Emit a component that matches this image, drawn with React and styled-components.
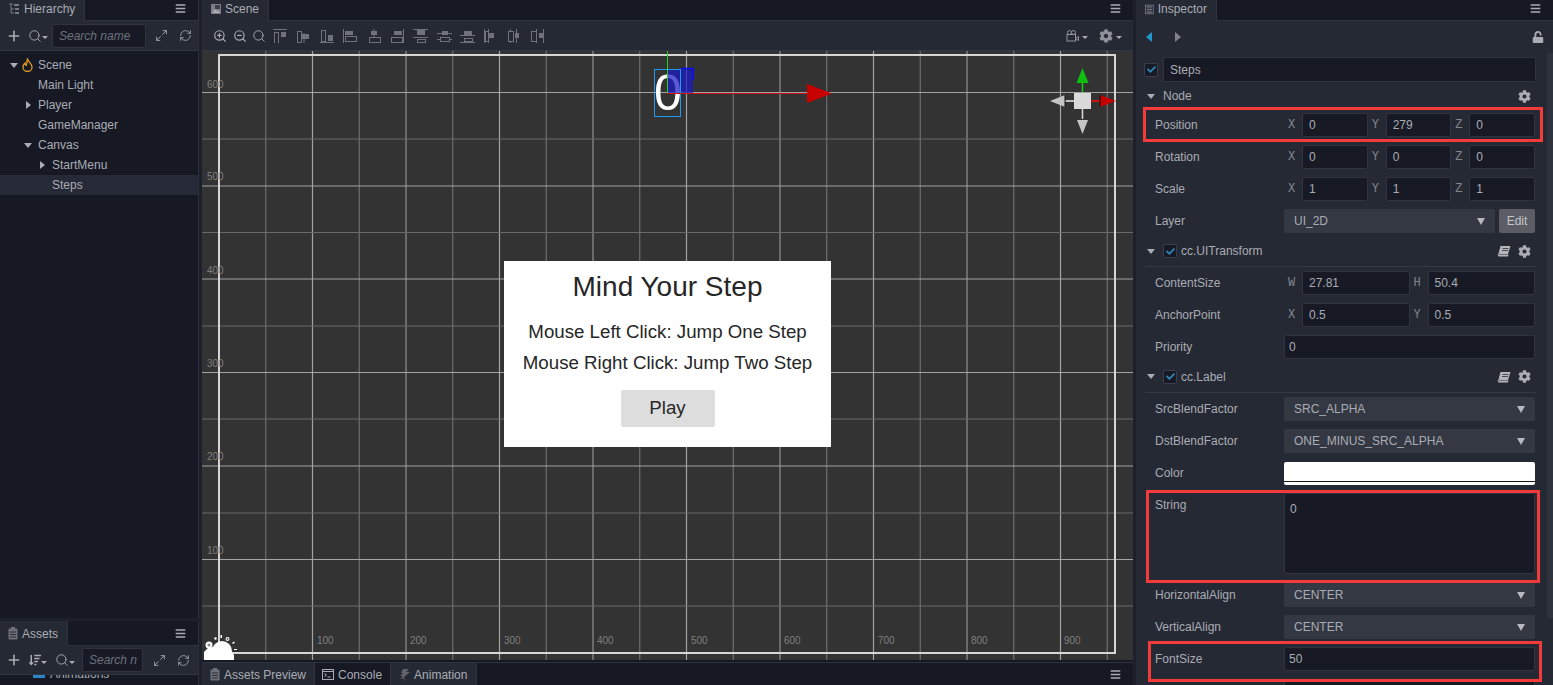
import React from 'react'
import styled, { createGlobalStyle } from 'styled-components'
import { FaBars, FaCheck, FaCog, FaSortAmountDown, FaUnlock } from 'react-icons/fa'
import { Maximize2, Plus, RefreshCw, Search, ZoomIn, ZoomOut } from 'lucide-react'

const GlobalStyle = createGlobalStyle`
  html, body {
    margin: 0;
    padding: 0;
    width: 100%;
    height: 100%;
    overflow: hidden;
    background: #1b1e29;
  }
  * { box-sizing: border-box; }
`

const Page = styled.div`
  width: 1553px;
  height: 685px;
  display: flex;
  gap: 3px;
  overflow: hidden;
  background: #1d202b;
  color: #a9acb3;
  font-family: "Liberation Sans", Arial, sans-serif;
  font-size: 12px;
`

const LeftColumn = styled.div`
  width: 199px;
  display: flex;
  flex-direction: column;
  gap: 3px;
`

const Panel = styled.section`
  display: flex;
  flex-direction: column;
  overflow: hidden;
  min-height: 0;
  flex: ${(p) => p.$flex || 'none'};
  height: ${(p) => (p.$height ? `${p.$height}px` : 'auto')};
  background: #161924;
  border-right: 1px solid #2b2f3b;
`

const TabBar = styled.div`
  height: ${(p) => p.$height || 21}px;
  flex: none;
  display: flex;
  align-items: stretch;
  background: #161924;
  border-bottom: 1px solid #2f3340;
  position: relative;
`

const Tab = styled.div`
  display: flex;
  align-items: center;
  gap: 4px;
  padding: 0 ${(p) => p.$pad || 9}px ${(p) => (p.$raise ? 3 : 0)}px ${(p) => p.$padLeft || 8}px;
  width: ${(p) => (p.$width ? `${p.$width}px` : 'auto')};
  height: calc(100% + 1px);
  background: ${(p) => (p.$active ? '#252934' : '#161924')};
  border-right: 1px solid #2f3340;
  color: #a9acb3;
  white-space: nowrap;
`

const MenuButton = styled.div`
  margin-left: auto;
  width: 36px;
  padding-bottom: ${(p) => (p.$raise ? 4 : 0)}px;
  display: flex;
  align-items: center;
  justify-content: center;
  color: #a9acb3;
  font-size: 11px;
`

const Toolbar = styled.div`
  height: ${(p) => p.$height}px;
  flex: none;
  display: flex;
  align-items: center;
  background: #252934;
  border-bottom: 1px solid #323643;
  padding-left: ${(p) => p.$padLeft || 0}px;
  color: #a9acb3;
`

const ToolIcon = styled.span`
  display: inline-flex;
  align-items: center;
  justify-content: center;
  flex: none;
  width: ${(p) => p.$width || 23}px;
  font-size: ${(p) => p.$size || 13}px;
  color: ${(p) => p.$color || '#a9acb3'};
`

const LockIcon = styled(ToolIcon)`
  margin-left: auto;
  margin-right: 2px;
`

const Caret = styled.i`
  display: inline-block;
  width: 0;
  height: 0;
  margin-top: 4px;
  border-left: 3px solid transparent;
  border-right: 3px solid transparent;
  border-top: 3px solid #a9acb3;
`

const SearchField = styled.div`
  flex: none;
  width: ${(p) => p.$width}px;
  height: 24px;
  margin: 0 ${(p) => p.$after || 0}px 0 ${(p) => p.$before || 0}px;
  padding-left: 6px;
  display: flex;
  align-items: center;
  overflow: hidden;
  white-space: nowrap;
  background: #171a25;
  border: 1px solid #303440;
  border-radius: 2px;
  color: #6d717b;
  font-style: italic;
`

const Tree = styled.div`
  flex: 1;
  padding-top: 4px;
  background: #161924;
`

const TreeRow = styled.div`
  height: 20px;
  display: flex;
  align-items: center;
  padding-left: ${(p) => p.$indent}px;
  background: ${(p) => (p.$selected ? '#252a36' : 'transparent')};
  color: #a9acb3;
`

const TreeName = styled.span`
  margin-left: ${(p) => p.$gap}px;
`

const Arrow = styled.i`
  display: inline-block;
  flex: none;
  width: 0;
  height: 0;
  ${(p) =>
    p.$open
      ? `border-left: 4px solid transparent; border-right: 4px solid transparent; border-top: 5px solid #a9acb3; margin-right: 4px;`
      : `border-top: 4px solid transparent; border-bottom: 4px solid transparent; border-left: 5px solid #a9acb3; margin: 0 7px 0 2px;`}
`

const NavBack = styled.i`
  flex: none;
  width: 0;
  height: 0;
  margin-left: 2px;
  border-top: 5px solid transparent;
  border-bottom: 5px solid transparent;
  border-right: 6px solid #1f97cf;
`

const NavForward = styled.i`
  flex: none;
  width: 0;
  height: 0;
  margin-left: 23px;
  border-top: 5px solid transparent;
  border-bottom: 5px solid transparent;
  border-left: 6px solid #7f828a;
`

const AssetPeek = styled.div`
  flex: 1;
  position: relative;
  padding-left: 33px;
  background: #161924;
  overflow: hidden;
`

const AssetFolder = styled.span`
  display: inline-block;
  width: 12px;
  height: 3px;
  background: #2e86c9;
  vertical-align: top;
  margin-right: 5px;
`

const AssetText = styled.span`
  display: inline-block;
  line-height: 12px;
  margin-top: -7px;
  vertical-align: top;
`

const ScenePanel = styled(Panel)`
  width: 931px;
  flex: none;
  border-right: none;
`

const Canvas = styled.div`
  height: 609px;
  flex: none;
  position: relative;
  background: #333333;
  overflow: hidden;
`

const GridSvg = styled.svg`
  display: block;
`

const Dialog = styled.div`
  position: absolute;
  left: 302px;
  top: 210px;
  width: 327px;
  height: 186px;
  padding-top: 9px;
  display: flex;
  flex-direction: column;
  align-items: center;
  background: #ffffff;
  color: #262626;
`

const DialogTitle = styled.div`
  font-size: 28px;
  line-height: 34px;
  margin-bottom: 12px;
  white-space: nowrap;
`

const DialogLine = styled.div`
  font-size: 18.7px;
  line-height: 31px;
  white-space: nowrap;
`

const PlayButton = styled.div`
  width: 94px;
  height: 37px;
  margin-top: 12px;
  padding-bottom: 2px;
  display: flex;
  align-items: center;
  justify-content: center;
  background: #dddddd;
  border-radius: 2px;
  font-size: 18.7px;
`

const BottomTabs = styled(TabBar)`
  margin-top: 2px;
  border-bottom: none;
  border-top: 1px solid #2f3340;
`

const InspectorPanel = styled(Panel)`
  flex: 1;
  border-right: none;
  background: #252934;
`

const InspectorBody = styled.div`
  flex: 1;
  position: relative;
  overflow: hidden;
  padding-right: 6px;
  background: #252934;
`

const Scrollbar = styled.div`
  position: absolute;
  right: 0;
  top: 32px;
  width: 6px;
  height: 565px;
  background: #2f333e;
`

const NavRow = styled.div`
  height: 33px;
  display: flex;
  align-items: center;
  padding: 0 0 1px 8px;
  color: #a9acb3;
`

const NameRow = styled.div`
  height: 31px;
  display: flex;
  align-items: center;
  padding: 0 11px 0 8px;
  gap: 5px;
`

const Check = styled.span`
  flex: none;
  width: 14px;
  height: 14px;
  display: inline-flex;
  align-items: center;
  justify-content: center;
  background: #171a25;
  border: 1px solid #3a3e4a;
  border-radius: 2px;
  color: #2f86b8;
  font-size: 9px;
`

const NameInput = styled.div`
  flex: 1;
  height: 25px;
  padding-left: 6px;
  display: flex;
  align-items: center;
  background: #171a25;
  border: 1px solid #303440;
  border-radius: 2px;
`

const SectionHeader = styled.div`
  height: ${(p) => p.$height}px;
  margin: 0 11px 0 9px;
  padding: 0 0 ${(p) => p.$raise || 0}px 2px;
  display: flex;
  align-items: center;
  gap: 4px;
  border-bottom: ${(p) => (p.$line ? '1px solid #353945' : 'none')};
  color: #a9acb3;
`

const SectionTools = styled.span`
  margin-left: auto;
  display: inline-flex;
  align-items: center;
  gap: 7px;
  padding-right: 5px;
  font-size: 13px;
`

const Row = styled.div`
  height: ${(p) => p.$height || 32}px;
  display: flex;
  align-items: ${(p) => (p.$top ? 'flex-start' : 'center')};
  padding: ${(p) => (p.$top ? '9px' : '0')} 12px 0 19px;
`

const Label = styled.div`
  width: 129px;
  flex: none;
  color: #a9acb3;
`

const Fields = styled.div`
  flex: 1;
  display: flex;
  min-width: 0;
`

const Axis = styled.div`
  flex: 1;
  display: flex;
  align-items: center;
`

const AxisLetter = styled.span`
  width: 18px;
  flex: none;
  padding-left: 4px;
  font-family: "Liberation Mono", monospace;
  font-size: 12px;
  color: #84878f;
`

const NumberInput = styled.div`
  flex: 1;
  height: 24px;
  padding-left: ${(p) => p.$padLeft || 6}px;
  display: flex;
  align-items: center;
  background: #171a25;
  border: 1px solid #303440;
  border-radius: 2px;
  color: #a9acb3;
`

const SelectBox = styled.div`
  flex: 1;
  height: 24px;
  padding: 0 10px;
  display: flex;
  align-items: center;
  justify-content: space-between;
  background: #343843;
  border-radius: 2px;
  color: #a9acb3;
`

const SelectArrow = styled.i`
  width: 0;
  height: 0;
  border-left: 4px solid transparent;
  border-right: 4px solid transparent;
  border-top: 7px solid #b6b8be;
`

const EditButton = styled.div`
  flex: none;
  width: 36px;
  height: 24px;
  margin-left: 4px;
  display: flex;
  align-items: center;
  justify-content: center;
  background: #5a5e64;
  border-radius: 2px;
  color: #c4c6ca;
`

const ColorSwatch = styled.div`
  flex: 1;
  height: 23px;
  position: relative;
  background: #ffffff;
  border-radius: 2px;
  &:after {
    content: '';
    position: absolute;
    left: 0;
    right: 0;
    bottom: 3px;
    height: 1px;
    background: #1a1a1a;
  }
`

const TextArea = styled.div`
  flex: 1;
  height: 81px;
  margin-top: -5px;
  padding: 8px 0 0 5px;
  background: #171a25;
  border: 1px solid #303440;
  border-radius: 2px;
`

const Highlight = styled.div`
  position: absolute;
  left: ${(p) => p.$left}px;
  top: ${(p) => p.$top}px;
  width: ${(p) => p.$width}px;
  height: ${(p) => p.$height}px;
  border: 3px solid #f53a3a;
  pointer-events: none;
`

const AlignGroup = styled.div`
  display: flex;
  gap: 8.4px;
  margin-left: 4px;
`

const RightTools = styled.div`
  margin-left: auto;
  margin-right: 11px;
  display: flex;
  align-items: center;
  gap: 11px;
`

const ToolPair = styled.span`
  display: inline-flex;
  align-items: center;
  gap: 3px;
  color: #8f929a;
  font-size: 14px;
`

const Svg = ({ w = 16, h = 16, children }) => (
  <svg width={w} height={h} viewBox={`0 0 ${w} ${h}`} fill="none">
    {children}
  </svg>
)

const HierarchyIcon = () => (
  <Svg w={12} h={12}>
    <path d="M1 1h4M3 1v9h3M3 6h3" stroke="#777a82" />
    <rect x="6" y="1" width="5" height="2" fill="#777a82" />
    <rect x="7" y="5" width="4" height="2" fill="#777a82" />
    <rect x="7" y="9" width="4" height="2" fill="#777a82" />
  </Svg>
)

const SceneIcon = () => (
  <Svg w={10} h={10}>
    <rect x="0" y="0" width="10" height="10" fill="#7c7f87" />
    <rect x="4" y="1" width="5" height="4" fill="#3c3f48" />
    <path d="M1 9l3-4 2 2 1-1 2 3z" fill="#a9acb3" />
  </Svg>
)

const ClipIcon = () => (
  <Svg w={10} h={13}>
    <rect x="0.5" y="1.5" width="9" height="11" rx="1" fill="#6d7078" />
    <rect x="3" y="0" width="4" height="3" fill="#6d7078" />
    <path d="M2 5h6M2 7.5h6M2 10h6" stroke="#2a2d36" />
  </Svg>
)

const InspectorIcon = () => (
  <Svg w={10} h={11}>
    <rect x="0.5" y="0.5" width="9" height="10" stroke="#777a82" />
    <path d="M2 2.5h6M2 5.5h6M2 8.5h6" stroke="#777a82" strokeWidth="1.5" />
  </Svg>
)

const ConsoleIcon = () => (
  <Svg w={12} h={11}>
    <rect x="0.5" y="0.5" width="11" height="10" stroke="#a9acb3" />
    <path d="M0 2.5h12" stroke="#a9acb3" />
    <path d="M2.5 4.5l2 1.5-2 1.5M5.5 8h3" stroke="#a9acb3" />
  </Svg>
)

const AnimationIcon = () => (
  <Svg w={10} h={12}>
    <path d="M3 0h6L6 3h4L4 8l1 4-2-3-3 1 3-3H0l3-3H1z" fill="#61646c" />
  </Svg>
)

const FlameIcon = () => (
  <Svg w={11} h={14}>
    <path
      d="M5.5 1C6 3.5 10 5.5 10 9a4.5 4.5 0 0 1-9 0C1 7.5 2 6 3 5c0 1.5.7 2.2 1.3 2.4C5 5.5 4.8 3 5.5 1z"
      stroke="#e09a1f"
      strokeWidth="1.3"
    />
  </Svg>
)

const CameraIcon = () => (
  <Svg w={13} h={12}>
    <circle cx="3.5" cy="2.5" r="2" stroke="#8f929a" />
    <circle cx="7.5" cy="2.5" r="2" stroke="#8f929a" />
    <rect x="1" y="4.5" width="8.5" height="6.5" stroke="#8f929a" />
    <path d="M10 8l2.5-1.5v4L10 9" stroke="#8f929a" />
  </Svg>
)

const BookIcon = () => (
  <Svg w={14} h={12}>
    <path d="M4 1h9.500L11 9H2z" fill="#b4b6bb" />
    <path d="M2 9.500a1 1 0 0 0 0 2h9l.5-2z" fill="#b4b6bb" />
    <path d="M1 10a2 2 0 0 1 1-1.500L4 1" stroke="#b4b6bb" />
    <path d="M5.500 3.500h6M5 5.500h6" stroke="#454852" />
  </Svg>
)

// each alignment button: solid block, outlined block and guide lines
const ALIGN_ICONS = [
  { lines: 'M0 .5h14', outline: [1, 3, 4, 11], solid: [8, 3, 5, 5] },
  { lines: 'M8 4v10', outline: [1, 2, 4, 11], solid: [6, 5, 7, 5] },
  { lines: 'M0 13.5h14', outline: [1, 1, 4, 11], solid: [8, 6, 5, 6] },
  { lines: 'M.5 0v14', outline: [2, 7, 11, 5], solid: [2, 2, 8, 4] },
  { lines: 'M7 0v14', outline: [2, 8, 11, 5], solid: [4, 2, 6, 4] },
  { lines: 'M13.5 0v14', outline: [1, 8, 11, 5], solid: [4, 2, 8, 4] },
  { lines: 'M0 .5h15M0 8.5h15', outline: [4, 10, 8, 3], solid: [4, 1, 8, 5] },
  { lines: 'M0 4.5h15M0 10.5h15', outline: [3, 8, 9, 4], solid: [5, 2, 6, 4] },
  { lines: 'M0 6.5h15M0 13.5h15', outline: [4, 9, 8, 3], solid: [4, 2, 8, 4] },
  { lines: 'M.5 0v14M4.5 0v14', outline: [1, 2, 3, 10], solid: [5, 4, 5, 5] },
  { lines: 'M3.5 0v14M9.5 0v14', outline: [1, 2, 5, 10], solid: [8, 4, 4, 5] },
  { lines: 'M6.5 0v14M13.5 0v14', outline: [1, 2, 5, 10], solid: [9, 4, 4, 5] },
]

const AlignIcon = ({ lines, outline, solid }) => (
  <Svg w={15} h={14}>
    <path d={lines} stroke="#6f727a" />
    <rect
      x={outline[0] + 0.5}
      y={outline[1] + 0.5}
      width={outline[2]}
      height={outline[3]}
      stroke="#6f727a"
      fill="#252934"
    />
    <rect x={solid[0]} y={solid[1]} width={solid[2]} height={solid[3]} fill="#6f727a" />
  </Svg>
)

const GRID_X = Array.from({ length: 20 }, (_, i) => 219 + i * 46.75)
const GRID_Y = [92.5, 139, 186, 232.5, 279, 326, 372.5, 419, 466, 513, 559.5, 606]
const LEFT_LABELS = [
  ['600', 84],
  ['500', 176],
  ['400', 270],
  ['300', 363],
  ['200', 456],
  ['100', 550],
]
const BOTTOM_LABELS = [
  ['100', 317],
  ['200', 410],
  ['300', 504],
  ['400', 597],
  ['500', 691],
  ['600', 784],
  ['700', 878],
  ['800', 971],
  ['900', 1064],
]

const SceneDrawing = () => (
  <GridSvg width="931" height="609" viewBox="202 51 931 609">
    {GRID_X.slice(1).map((x, i) => (
      <line
        key={x}
        x1={x}
        x2={x}
        y1="51"
        y2="660"
        stroke={i % 2 === 1 ? '#a3a3a3' : '#6e6e6e'}
        strokeWidth={i % 4 === 3 ? 1 : 1.2}
      />
    ))}
    {GRID_Y.map((y, i) => (
      <line
        key={y}
        x1="202"
        x2="1133"
        y1={y}
        y2={y}
        stroke={i % 2 === 0 ? '#a3a3a3' : '#6a6a6a'}
      />
    ))}
    <rect x="219" y="55" width="896" height="598" stroke="#d6d6d6" strokeWidth="2" fill="none" />
    {LEFT_LABELS.map(([t, y]) => (
      <text key={t} x="207" y={y + 4} fontSize="10" fill="#7f7f7f" fontFamily="Liberation Sans">
        {t}
      </text>
    ))}
    {BOTTOM_LABELS.map(([t, x]) => (
      <text key={t} x={x} y="644" fontSize="10" fill="#7f7f7f" fontFamily="Liberation Sans">
        {t}
      </text>
    ))}

    {/* selected label node */}
    <text x="654" y="110" fontSize="50" fill="#ffffff" fontFamily="Liberation Sans">
      0
    </text>
    <rect x="667" y="69" width="26" height="24" fill="#1a1ac8" opacity="0.72" />
    <path d="M681 68.5h12V80" stroke="#0a0aff" strokeWidth="1.5" fill="none" />
    <rect x="654.5" y="69.5" width="26" height="47" stroke="#1e9bf0" fill="none" />
    <line x1="667.5" x2="667.5" y1="51" y2="93" stroke="#22d322" />
    <line x1="667" x2="808" y1="93.5" y2="93.5" stroke="#d01010" />
    <path d="M807 84l25 9.5-25 9.5z" fill="#c90000" />

    {/* view gizmo */}
    <line x1="1082.5" x2="1082.5" y1="80" y2="92" stroke="#10d010" strokeWidth="1.5" />
    <path d="M1082.5 68l6 15h-12z" fill="#0fbf0f" />
    <line x1="1090" x2="1101" y1="101" y2="101" stroke="#c81414" strokeWidth="2" />
    <path d="M1100 95l16 6-16 6z" fill="#c60000" />
    <line x1="1100" x2="1100" y1="95" y2="107" stroke="#111111" />
    <line x1="1064" x2="1075" y1="101" y2="101" stroke="#bdbdbd" strokeWidth="2" />
    <path d="M1065 95l-15 6 15 6z" fill="#c4c4c4" />
    <line x1="1065" x2="1065" y1="95" y2="107" stroke="#111111" />
    <line x1="1082.5" x2="1082.5" y1="108" y2="119" stroke="#d8d8d8" strokeWidth="1.5" />
    <path d="M1077 120h11l-5.5 14z" fill="#c4c4c4" />
    <rect x="1074" y="93" width="17" height="16" fill="#dadada" />

    {/* scene light badge */}
    <g fill="#ffffff">
      <circle cx="222" cy="651" r="10" />
      <path d="M204 660v-8l4-4 5-1 3 3 4 10z" />
      <path d="M224 660l8-8 2 3v5z" />
      <circle cx="209" cy="645" r="3.5" />
      <path d="M214 638l2-1 1 2-2 1zM220.5 635h1.5v3h-1.5zM232 643l2-1.5 1 1-2 1.5zM234 649h3v1h-3z" />
      <circle cx="227.5" cy="639" r="2" />
    </g>
    <circle cx="209" cy="645" r="1.5" fill="#8a8a8a" />
    <circle cx="227.5" cy="639" r="0.9" fill="#5a5a5a" />
  </GridSvg>
)

const HeaderIcons = ({ book }) => (
  <SectionTools>
    {book && <BookIcon />}
    <FaCog />
  </SectionTools>
)

const VectorRow = ({ label, axes }) => (
  <Row>
    <Label>{label}</Label>
    <Fields>
      {axes.map(([letter, value]) => (
        <Axis key={letter}>
          <AxisLetter>{letter}</AxisLetter>
          <NumberInput>{value}</NumberInput>
        </Axis>
      ))}
    </Fields>
  </Row>
)

const SelectRow = ({ label, value, children }) => (
  <Row>
    <Label>{label}</Label>
    <Fields>
      <SelectBox>
        {value}
        <SelectArrow />
      </SelectBox>
      {children}
    </Fields>
  </Row>
)

const InputRow = ({ label, value }) => (
  <Row>
    <Label>{label}</Label>
    <Fields>
      <NumberInput $padLeft={4}>{value}</NumberInput>
    </Fields>
  </Row>
)

const App = () => (
  <Page>
    <GlobalStyle />
    <LeftColumn>
      <Panel $height={618}>
        <TabBar>
          <Tab $active $raise>
            <HierarchyIcon />
            Hierarchy
          </Tab>
          <MenuButton $raise>
            <FaBars />
          </MenuButton>
        </TabBar>
        <Toolbar $height={30} $padLeft={3}>
          <ToolIcon $width={21}>
            <Plus size={16} strokeWidth={2.4} />
          </ToolIcon>
          <ToolIcon $width={28}>
            <Search size={14} strokeWidth={1.6} />
            <Caret />
          </ToolIcon>
          <SearchField $width={94} $after={2}>
            Search name
          </SearchField>
          <ToolIcon $width={26}>
            <Maximize2 size={13} strokeWidth={1.6} />
          </ToolIcon>
          <ToolIcon $width={23}>
            <RefreshCw size={13} strokeWidth={1.5} />
          </ToolIcon>
        </Toolbar>
        <Tree>
          <TreeRow $indent={10}>
            <Arrow $open />
            <FlameIcon />
            <TreeName $gap={5}>Scene</TreeName>
          </TreeRow>
          <TreeRow $indent={38}>Main Light</TreeRow>
          <TreeRow $indent={24}>
            <Arrow />
            Player
          </TreeRow>
          <TreeRow $indent={38}>GameManager</TreeRow>
          <TreeRow $indent={24}>
            <Arrow $open />
            <TreeName $gap={2}>Canvas</TreeName>
          </TreeRow>
          <TreeRow $indent={38}>
            <Arrow />
            StartMenu
          </TreeRow>
          <TreeRow $indent={52} $selected>
            Steps
          </TreeRow>
        </Tree>
      </Panel>
      <Panel $flex="1">
        <TabBar $height={25}>
          <Tab $active $width={68}>
            <ClipIcon />
            Assets
          </Tab>
          <MenuButton>
            <FaBars />
          </MenuButton>
        </TabBar>
        <Toolbar $height={29} $padLeft={3}>
          <ToolIcon $width={21}>
            <Plus size={16} strokeWidth={2.4} />
          </ToolIcon>
          <ToolIcon $width={27} $size={12}>
            <FaSortAmountDown />
            <Caret />
          </ToolIcon>
          <ToolIcon $width={28}>
            <Search size={14} strokeWidth={1.6} />
            <Caret />
          </ToolIcon>
          <SearchField $width={61} $after={3} $before={3}>
            Search n
          </SearchField>
          <ToolIcon $width={26}>
            <Maximize2 size={13} strokeWidth={1.6} />
          </ToolIcon>
          <ToolIcon $width={23}>
            <RefreshCw size={13} strokeWidth={1.5} />
          </ToolIcon>
        </Toolbar>
        <AssetPeek>
          <AssetFolder />
          <AssetText>Animations</AssetText>
        </AssetPeek>
      </Panel>
    </LeftColumn>

    <ScenePanel>
      <TabBar>
        <Tab $active $padLeft={9} $raise>
          <SceneIcon />
          Scene
        </Tab>
        <MenuButton $raise>
          <FaBars />
        </MenuButton>
      </TabBar>
      <Toolbar $height={30} $padLeft={8}>
        <ToolIcon $width={20}>
          <ZoomIn size={14} strokeWidth={2} />
        </ToolIcon>
        <ToolIcon $width={19}>
          <ZoomOut size={14} strokeWidth={2} />
        </ToolIcon>
        <ToolIcon $width={20}>
          <Search size={14} strokeWidth={1.6} />
        </ToolIcon>
        <AlignGroup>
          {ALIGN_ICONS.map((icon, i) => (
            <AlignIcon key={i} {...icon} />
          ))}
        </AlignGroup>
        <RightTools>
          <ToolPair>
            <CameraIcon />
            <Caret />
          </ToolPair>
          <ToolPair>
            <FaCog />
            <Caret />
          </ToolPair>
        </RightTools>
      </Toolbar>
      <Canvas>
        <SceneDrawing />
        <Dialog>
          <DialogTitle>Mind Your Step</DialogTitle>
          <DialogLine>Mouse Left Click: Jump One Step</DialogLine>
          <DialogLine>Mouse Right Click: Jump Two Step</DialogLine>
          <PlayButton>Play</PlayButton>
        </Dialog>
      </Canvas>
      <BottomTabs $height={23}>
        <Tab $active $padLeft={8} $pad={8}>
          <ClipIcon />
          Assets Preview
        </Tab>
        <Tab $padLeft={7} $pad={8}>
          <ConsoleIcon />
          Console
        </Tab>
        <Tab $active $padLeft={9} $pad={9}>
          <AnimationIcon />
          Animation
        </Tab>
        <MenuButton>
          <FaBars />
        </MenuButton>
      </BottomTabs>
    </ScenePanel>

    <InspectorPanel>
      <TabBar>
        <Tab $active $width={81} $padLeft={9} $raise>
          <InspectorIcon />
          Inspector
        </Tab>
        <MenuButton $raise>
          <FaBars />
        </MenuButton>
      </TabBar>
      <InspectorBody>
        <NavRow>
          <NavBack />
          <NavForward />
          <LockIcon $width={14} $size={12}>
            <FaUnlock />
          </LockIcon>
        </NavRow>
        <NameRow>
          <Check>
            <FaCheck />
          </Check>
          <NameInput>Steps</NameInput>
        </NameRow>
        <SectionHeader $height={24} $raise={2}>
          <Arrow $open />
          Node
          <HeaderIcons />
        </SectionHeader>
        <VectorRow label="Position" axes={[['X', '0'], ['Y', '279'], ['Z', '0']]} />
        <VectorRow label="Rotation" axes={[['X', '0'], ['Y', '0'], ['Z', '0']]} />
        <VectorRow label="Scale" axes={[['X', '1'], ['Y', '1'], ['Z', '1']]} />
        <SelectRow label="Layer" value="UI_2D">
          <EditButton>Edit</EditButton>
        </SelectRow>
        <SectionHeader $height={30} $line $raise={1}>
          <Arrow $open />
          <Check>
            <FaCheck />
          </Check>
          cc.UITransform
          <HeaderIcons book />
        </SectionHeader>
        <VectorRow label="ContentSize" axes={[['W', '27.81'], ['H', '50.4']]} />
        <VectorRow label="AnchorPoint" axes={[['X', '0.5'], ['Y', '0.5']]} />
        <InputRow label="Priority" value="0" />
        <SectionHeader $height={30} $line $raise={2}>
          <Arrow $open />
          <Check>
            <FaCheck />
          </Check>
          cc.Label
          <HeaderIcons book />
        </SectionHeader>
        <SelectRow label="SrcBlendFactor" value="SRC_ALPHA" />
        <SelectRow label="DstBlendFactor" value="ONE_MINUS_SRC_ALPHA" />
        <Row>
          <Label>Color</Label>
          <Fields>
            <ColorSwatch />
          </Fields>
        </Row>
        <Row $height={90} $top>
          <Label>String</Label>
          <Fields>
            <TextArea>0</TextArea>
          </Fields>
        </Row>
        <SelectRow label="HorizontalAlign" value="CENTER" />
        <SelectRow label="VerticalAlign" value="CENTER" />
        <InputRow label="FontSize" value="50" />
        <InputRow label="" value="" />
        <Scrollbar />
        <Highlight $left={7} $top={86} $width={400} $height={35} />
        <Highlight $left={10} $top={469} $width={394} $height={93} />
        <Highlight $left={12} $top={620} $width={394} $height={41} />
      </InspectorBody>
    </InspectorPanel>
  </Page>
)

export default App
